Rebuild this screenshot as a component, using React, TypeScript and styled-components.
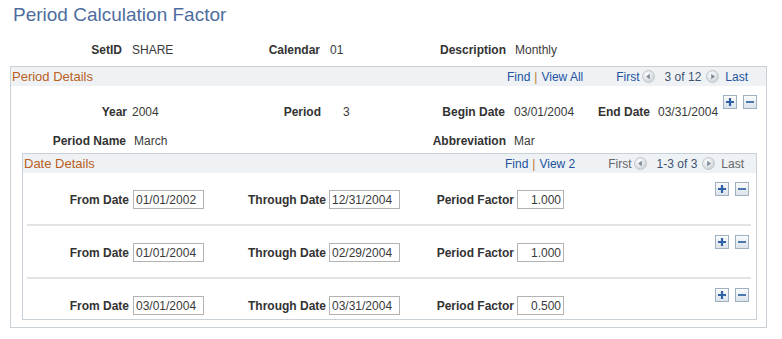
import React from 'react';
import styled, { createGlobalStyle } from 'styled-components';

const GlobalStyle = createGlobalStyle`
	body {
		margin: 0;
		background: #ffffff;
		font-family: "Liberation Sans", Arial, sans-serif;
		font-size: 12px;
		color: #333333;
	}
`;

const Page = styled.div`
	width: 782px;
`;

const Title = styled.h1`
	margin: 0;
	padding: 3px 0 0 13px;
	font-size: 19px;
	line-height: 24px;
	font-weight: normal;
	color: #4e6d9e;
`;

const KeyRow = styled.div`
	display: flex;
	margin-top: 15px;
	height: 16px;
	line-height: 16px;
`;

const Field = styled.div<{ $width?: number }>`
	display: flex;
	align-items: center;
	flex: none;
	width: ${(p) => (p.$width ? `${p.$width}px` : 'auto')};
	line-height: 16px;
`;

const Label = styled.span<{ $width: number; $gap: number }>`
	flex: none;
	width: ${(p) => p.$width}px;
	margin-right: ${(p) => p.$gap}px;
	text-align: right;
	font-weight: bold;
	color: #333333;
	white-space: nowrap;
`;

const Value = styled.span`
	color: #3a3a3a;
	white-space: nowrap;
`;

const Box = styled.div<{ $margin: string }>`
	margin: ${(p) => p.$margin};
	border: 1px solid #c9d0d8;
`;

const Header = styled.div<{ $padRight: number }>`
	display: flex;
	align-items: center;
	height: 19px;
	padding: 0 ${(p) => p.$padRight}px 0 1px;
	background: #eef2f5;
`;

const HeaderTitle = styled.span`
	font-size: 13px;
	color: #bb5e22;
	margin-right: auto;
`;

const LinkText = styled.span<{ $disabled?: boolean; $left?: number }>`
	color: ${(p) => (p.$disabled ? '#666666' : '#23539f')};
	margin-left: ${(p) => p.$left ?? 0}px;
`;

const Pipe = styled.span`
	color: #c07a30;
	margin: 0 4px;
`;

const Pager = styled.div`
	display: flex;
	align-items: center;
	margin-left: 33px;
`;

const Count = styled.span`
	color: #3f5270;
	margin: 0 3px 0 8px;
`;

const ArrowWrap = styled.span`
	display: inline-flex;
	margin: 0 2px;
`;

const Arrow = ({ dir }: { dir: 'left' | 'right' }) => (
	<ArrowWrap>
		<svg width="13" height="13" viewBox="0 0 13 13">
			<defs>
				<radialGradient id={`g-${dir}`} cx="40%" cy="35%" r="70%">
					<stop offset="0%" stopColor="#ffffff" />
					<stop offset="100%" stopColor="#c9ced4" />
				</radialGradient>
			</defs>
			<circle cx="6.5" cy="6.5" r="6" fill={`url(#g-${dir})`} stroke="#c2c7cd" />
			{dir === 'left' ? (
				<path d="M4 6.5 L7.8 3.8 L7.8 9.2 Z" fill="#7e8b9b" />
			) : (
				<path d="M9 6.5 L5.2 3.8 L5.2 9.2 Z" fill="#7e8b9b" />
			)}
		</svg>
	</ArrowWrap>
);

const RowButtons = styled.div`
	display: flex;
	gap: 6px;
	margin-left: auto;
	flex: none;
`;

const SquareButton = styled.span`
	display: inline-flex;
	align-items: center;
	justify-content: center;
	width: 14px;
	height: 14px;
	box-sizing: border-box;
	border: 1px solid #9fb0c0;
	background: linear-gradient(#fafcfd, #dbe3ea);
`;

const AddDelete = () => (
	<RowButtons>
		<SquareButton>
			<svg width="10" height="10" viewBox="0 0 10 10">
				<path d="M1 5 H9 M5 1 V9" stroke="#2f62a8" strokeWidth="2.2" />
			</svg>
		</SquareButton>
		<SquareButton>
			<svg width="10" height="10" viewBox="0 0 10 10">
				<path d="M1 5 H9" stroke="#4a78b0" strokeWidth="2" />
			</svg>
		</SquareButton>
	</RowButtons>
);

const PeriodBody = styled.div`
	display: flex;
	align-items: flex-start;
	padding: 9px 9px 0 0;
`;

const FieldColumn = styled.div`
	display: flex;
	flex-direction: column;
	gap: 13px;
	margin-top: 9px;
`;

const FieldRow = styled.div`
	display: flex;
	align-items: center;
`;

const DateRow = styled.div<{ $last?: boolean }>`
	display: flex;
	align-items: flex-start;
	padding: 9px 7px ${(p) => (p.$last ? 4 : 15)}px 0;
`;

const DateFields = styled.div`
	display: flex;
	align-items: center;
	margin-top: 8px;
`;

const Divider = styled.div`
	height: 2px;
	margin: 0 5px 0 4px;
	background: #e3e3e3;
`;

const TextBox = styled.input<{ $width: number; $right?: boolean }>`
	box-sizing: border-box;
	width: ${(p) => p.$width}px;
	height: 19px;
	padding: 0 2px;
	border: 1px solid #b3b3b3;
	font-family: "Liberation Sans", Arial, sans-serif;
	font-size: 12px;
	color: #3a3a3a;
	text-align: ${(p) => (p.$right ? 'right' : 'left')};
	background: #ffffff;
	outline: none;
`;

const dateRows = [
	{ from: '01/01/2002', through: '12/31/2004', factor: '1.000' },
	{ from: '01/01/2004', through: '02/29/2004', factor: '1.000' },
	{ from: '03/01/2004', through: '03/31/2004', factor: '0.500' },
];

function App() {
	return (
		<Page>
			<GlobalStyle />
			<Title>Period Calculation Factor</Title>
			<KeyRow>
				<Field $width={200}>
					<Label $width={122} $gap={10}>SetID</Label>
					<Value>SHARE</Value>
				</Field>
				<Field $width={200}>
					<Label $width={120} $gap={10}>Calendar</Label>
					<Value>01</Value>
				</Field>
				<Field>
					<Label $width={106} $gap={9}>Description</Label>
					<Value>Monthly</Value>
				</Field>
			</KeyRow>

			<Box $margin="8px 15px 0 10px">
				<Header $padRight={18}>
					<HeaderTitle>Period Details</HeaderTitle>
					<LinkText>Find</LinkText>
					<Pipe>|</Pipe>
					<LinkText>View All</LinkText>
					<Pager>
						<LinkText>First</LinkText>
						<Arrow dir="left" />
						<Count>3 of 12</Count>
						<Arrow dir="right" />
						<LinkText $left={4}>Last</LinkText>
					</Pager>
				</Header>
				<PeriodBody>
					<FieldColumn>
						<FieldRow>
							<Field $width={200}>
								<Label $width={116} $gap={5}>Year</Label>
								<Value>2004</Value>
							</Field>
							<Field $width={190}>
								<Label $width={110} $gap={22}>Period</Label>
								<Value>3</Value>
							</Field>
							<Field $width={190}>
								<Label $width={104} $gap={9}>Begin Date</Label>
								<Value>03/01/2004</Value>
							</Field>
							<Field>
								<Label $width={59} $gap={8}>End Date</Label>
								<Value>03/31/2004</Value>
							</Field>
						</FieldRow>
						<FieldRow>
							<Field $width={390}>
								<Label $width={115} $gap={8}>Period Name</Label>
								<Value>March</Value>
							</Field>
							<Field>
								<Label $width={105} $gap={8}>Abbreviation</Label>
								<Value>Mar</Value>
							</Field>
						</FieldRow>
					</FieldColumn>
					<AddDelete />
				</PeriodBody>

				<Box $margin="4px 9px 7px 11px">
					<Header $padRight={12}>
						<HeaderTitle>Date Details</HeaderTitle>
						<LinkText>Find</LinkText>
						<Pipe>|</Pipe>
						<LinkText>View 2</LinkText>
						<Pager>
							<LinkText $disabled>First</LinkText>
							<Arrow dir="left" />
							<Count>1-3 of 3</Count>
							<Arrow dir="right" />
							<LinkText $disabled $left={4}>Last</LinkText>
						</Pager>
					</Header>
					{dateRows.map((row, i) => {
						const last = i === dateRows.length - 1;
						return (
							<React.Fragment key={i}>
								<DateRow $last={last}>
									<DateFields>
										<Field $width={200}>
											<Label $width={106} $gap={4}>From Date</Label>
											<TextBox $width={71} readOnly value={row.from} />
										</Field>
										<Field $width={190}>
											<Label $width={103} $gap={3}>Through Date</Label>
											<TextBox $width={71} readOnly value={row.through} />
										</Field>
										<Field>
											<Label $width={101} $gap={3}>Period Factor</Label>
											<TextBox $width={47} $right readOnly value={row.factor} />
										</Field>
									</DateFields>
									<AddDelete />
								</DateRow>
								{!last && <Divider />}
							</React.Fragment>
						);
					})}
				</Box>
			</Box>
		</Page>
	);
}

export default App;
